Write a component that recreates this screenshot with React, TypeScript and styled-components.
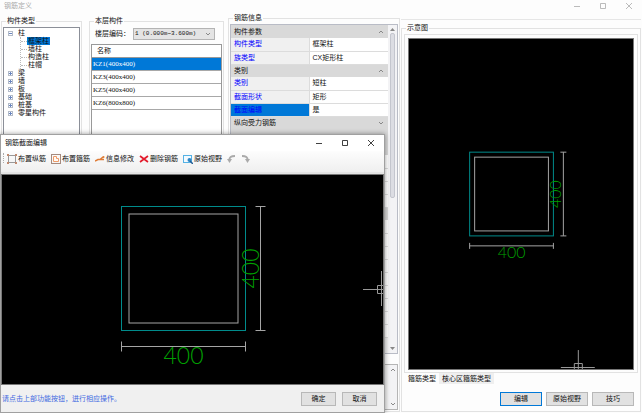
import React from "react";
import styled, { createGlobalStyle } from "styled-components";

const GlobalStyle = createGlobalStyle`
  html, body, #root { height: 100%; }
  body { margin: 0; background: #fdfdfd; }
  *, *::before, *::after { box-sizing: border-box; }
  body, button, select, input {
    font-family: "Liberation Mono", "Noto Sans CJK SC", monospace;
    font-size: 7px;
    line-height: 8px;
    color: #111;
  }
`;

const Window = styled.div`
  position: relative;
  display: flex;
  flex-direction: column;
  min-height: 100vh;
  overflow: hidden;
`;

const TitleBar = styled.header<{ $muted?: boolean }>`
  display: flex;
  align-items: center;
  justify-content: space-between;
  flex: none;
  height: ${(p) => (p.$muted ? 12 : 16)}px;
  padding: 0 4px;
  color: ${(p) => (p.$muted ? "#aaa" : "#111")};
`;

const Title = styled.h1`
  margin: 0;
  font-size: 7px;
  font-weight: 400;
`;

const WindowControls = styled.div`
  display: flex;
  gap: 18px;
  padding-right: 5px;
`;

const ControlButton = styled.button`
  display: flex;
  width: 8px;
  height: 8px;
  padding: 0;
  border: 0;
  background: none;
  color: inherit;
`;

const Columns = styled.main`
  display: flex;
  flex: 1;
  align-items: stretch;
  padding: 0 1px;
`;

const Group = styled.fieldset<{ $width: number; $top: number; $right: number }>`
  display: flex;
  flex-direction: column;
  flex: none;
  width: ${(p) => p.$width}px;
  min-width: 0;
  margin: ${(p) => p.$top}px ${(p) => p.$right}px 1px 0;
  padding: 1px;
  border: 1px solid #e2e2e2;
`;

const PreviewColumn = styled.div`
  display: flex;
  flex: 1;
  min-width: 0;
  margin-top: 7px;
  border-top: 1px solid #e6e6e6;
`;

const PreviewGroup = styled(Group)`
  flex: 1;
  width: auto;
`;

const Legend = styled.legend`
  margin-left: 3px;
  padding: 0 1px;
  line-height: 10px;
`;

const TreeBox = styled.nav`
  flex: 1;
  padding: 1px 4px;
  border: 1px solid #8b8f98;
  background: #fff;
`;

const TreeList = styled.ul<{ $nested?: boolean }>`
  margin: 0 0 0 ${(p) => (p.$nested ? 12 : 0)}px;
  padding: 0;
  list-style: none;
  border-left: ${(p) => (p.$nested ? "1px dotted #bbb" : "0")};
`;

const TreeRow = styled.div`
  display: flex;
  align-items: center;
  height: 8px;
`;

const Expander = styled.button`
  display: flex;
  width: 5px;
  height: 5px;
  margin-right: 4px;
  padding: 0;
  border: 0;
  background: none;
`;

const Branch = styled.span`
  width: 6px;
  border-top: 1px dotted #bbb;
`;

const TreeLabel = styled.span<{ $selected?: boolean }>`
  padding: 0 1px;
  background: ${(p) => (p.$selected ? "#0078d7" : "transparent")};
`;

const FloorField = styled.label`
  display: flex;
  align-items: center;
  justify-content: space-between;
  height: 13px;
  margin: 0 7px 4px 4px;
`;

const SelectFrame = styled.span`
  display: flex;
  align-items: center;
  width: 82px;
  height: 12px;
  padding-right: 3px;
  border: 1px solid #b4b4b4;
  background: #e4e4e4;
`;

const Select = styled.select`
  flex: 1;
  min-width: 0;
  padding: 0 0 0 1px;
  border: 0;
  appearance: none;
  background: transparent;
  font-size: 6px;
`;

const ListBox = styled.div`
  flex: 1;
  border: 1px solid #999;
  background: #fff;
`;

const ListTable = styled.table`
  width: 100%;
  border-collapse: collapse;
`;

const ListHead = styled.th`
  height: 12px;
  padding: 0 5px;
  border-bottom: 1px solid #999;
  font-weight: 400;
  text-align: left;
`;

const ListCell = styled.td<{ $selected?: boolean }>`
  height: 13px;
  padding: 0 1px;
  border-bottom: 1px solid #a8a8a8;
  background: ${(p) => (p.$selected ? "#0078d7" : "#fff")};
  color: ${(p) => (p.$selected ? "#fff" : "#111")};
  font-family: "Liberation Serif", serif;
`;

const InfoBox = styled.div`
  display: flex;
  flex: 1;
  border: 1px solid #b9bcc6;
  background: #f0f0f0;
`;

const PropertyTable = styled.table`
  flex: 1;
  align-self: flex-start;
  border-collapse: collapse;
  table-layout: fixed;
`;

const SectionHead = styled.th`
  height: 13px;
  padding: 0 4px 0 3px;
  background: #d9d9d9;
  font-weight: 400;
  text-align: left;
`;

const SectionLine = styled.div`
  display: flex;
  align-items: center;
  justify-content: space-between;
`;

const PropertyName = styled.th<{ $selected?: boolean }>`
  width: 78px;
  height: 13px;
  padding: 0 3px;
  border-bottom: 1px solid #dcdcdc;
  background: ${(p) => (p.$selected ? "#0078d7" : "#f0f0f0")};
  color: #00f;
  font-weight: 400;
  text-align: left;
`;

const PropertyValue = styled.td`
  padding: 0 3px;
  border-bottom: 1px solid #dcdcdc;
  border-left: 1px solid #dcdcdc;
  background: #fff;
  font-family: "Liberation Sans", "Noto Sans CJK SC", sans-serif;
`;

const ScrollTrack = styled.div`
  display: flex;
  flex-direction: column;
  align-items: center;
  justify-content: space-between;
  flex: none;
  width: 9px;
  padding: 3px 0;
  background: #f3f3f5;
`;

const ScrollThumb = styled.div`
  width: 5px;
  height: 165px;
  margin: 2px 0 auto;
  border: 1px solid #c4c6ce;
  border-radius: 2px;
  background: #dcdde3;
`;

const NoteBox = styled.div`
  display: flex;
  justify-content: flex-end;
  height: 46px;
  margin-top: 10px;
  border: 1px solid #b5b5b5;
  background: #f0f0f0;
`;

const TabPanel = styled.div`
  display: flex;
  flex: 1;
  margin: 0 1px;
  padding: 3px 3px 2px;
  border: 1px solid #e2e2e2;
`;

const Viewport = styled.div`
  display: flex;
  flex: 1;
  min-width: 0;
  border: 1px solid #777;
  background: #000;
`;

const Drawing = styled.svg`
  display: block;
  width: 100%;
  height: 100%;
`;

const Dimension = styled.text`
  fill: #00a000;
  font-family: Lato, "Liberation Sans", sans-serif;
  font-weight: 300;
  text-anchor: middle;
`;

const Tabs = styled.div`
  display: flex;
  margin-left: 2px;
`;

const Tab = styled.button<{ $active?: boolean }>`
  height: 11px;
  padding: 0 3px;
  border: 0;
  background: ${(p) => (p.$active ? "#fdfdfd" : "#efefef")};
`;

const Actions = styled.div`
  display: flex;
  justify-content: flex-end;
  gap: 4px;
  margin: 8px 5px 4px 0;
`;

const PushButton = styled.button<{ $width: number; $default?: boolean }>`
  width: ${(p) => p.$width}px;
  height: 14px;
  padding: 0;
  border: 1px solid ${(p) => (p.$default ? "#0078d7" : "#b8b8b8")};
  background: #e1e1e1;
`;

const Dialog = styled.section`
  position: absolute;
  top: 134px;
  bottom: 0;
  left: 0;
  display: flex;
  flex-direction: column;
  width: 385px;
  border: 1px solid #a0a0a0;
  background: #fff;
  box-shadow: 0 0 5px rgba(0, 0, 0, 0.4);
`;

const Toolbar = styled.div`
  display: flex;
  align-items: flex-start;
  gap: 5px;
  height: 23px;
  padding: 2px 0 0 2px;
  border-bottom: 2px solid #e4e4e4;
  background: linear-gradient(#fdfdfd, #efefef);
`;

const Grip = styled.span`
  height: 10px;
  margin-right: -2px;
  border-left: 1px dotted #aaa;
`;

const ToolButton = styled.button`
  display: flex;
  align-items: center;
  gap: 1px;
  height: 11px;
  padding: 0;
  border: 0;
  background: none;
  white-space: nowrap;
`;

const DialogFooter = styled.footer`
  display: flex;
  align-items: center;
  gap: 6px;
  height: 27px;
  padding: 0 7px 0 1px;
  background: #f0f0f0;
`;

const Hint = styled.p`
  flex: 1;
  margin: 0;
  color: #4169e1;
`;

function Controls() {
  const shapes = [
    ["最小化", "M1 4.5H7"],
    ["最大化", "M1.5 1.5H6.5V6.5H1.5Z"],
    ["关闭", "M1 1L7 7M7 1L1 7"],
  ];
  return (
    <WindowControls>
      {shapes.map(([label, d]) => (
        <ControlButton key={label} aria-label={label}>
          <svg width="8" height="8" fill="none" stroke="currentColor" strokeOpacity="0.8"><path d={d} /></svg>
        </ControlButton>
      ))}
    </WindowControls>
  );
}

function Chevron({ up }: { up?: boolean }) {
  return (
    <svg width="6" height="4" fill="none" stroke="#888">
      <path d={up ? "M1 3L3 1L5 3" : "M1 1L3 3L5 1"} />
    </svg>
  );
}

function TreeToggle({ open }: { open?: boolean }) {
  return (
    <Expander aria-label={open ? "折叠" : "展开"}>
      <svg width="5" height="5" fill="none">
        <rect x="0.5" y="0.5" width="4" height="4" fill="#fff" stroke="#b4bcc9" />
        <path d={open ? "M1 2.5H4" : "M1 2.5H4M2.5 1V4"} stroke="#6a86c0" />
      </svg>
    </Expander>
  );
}

function SectionDrawing(p: {
  viewBox: string; x: number; y: number; size: number; inset: number;
  tick: number; gapX: number; gapY: number; font: number; cap: number; cursor: string;
}) {
  const { x, y, size, inset, tick, gapX, gapY, font, cap } = p;
  const right = x + size;
  const bottom = y + size;
  const dx = right + gapX;
  const dy = bottom + gapY;
  const mid = size / 2;
  const textX = dx - 2;
  const textY = y + mid;
  return (
    <Drawing viewBox={p.viewBox} preserveAspectRatio="xMidYMid slice" fill="none">
      <rect x={x} y={y} width={size} height={size} stroke="#008b8b" />
      <rect x={x + inset} y={y + inset} width={size - 2 * inset} height={size - 2 * inset} stroke="#a5a5a5" />
      <path
        stroke="#a5a5a5"
        d={`M${dx} ${y}V${bottom}M${dx - tick} ${y}H${dx + tick}M${dx - tick} ${bottom}H${dx + tick}M${x} ${dy}H${right}M${x} ${dy - tick}V${dy + tick}M${right} ${dy - tick}V${dy + tick}`}
      />
      <path stroke="#999" d={p.cursor} />
      <Dimension x={x + mid} y={dy + cap} fontSize={font}>400</Dimension>
      <Dimension x={textX} y={textY} fontSize={font} transform={`rotate(-90 ${textX} ${textY})`}>400</Dimension>
    </Drawing>
  );
}

const columnKinds = ["框架柱", "墙柱", "构造柱", "柱帽"];
const otherKinds = ["梁", "墙", "板", "基础", "桩基", "零星构件"];
const members = ["KZ1(400x400)", "KZ3(400x400)", "KZ5(400x400)", "KZ6(800x800)"];

const blankRows = (count: number): [string, string][] =>
  Array.from({ length: count }, () => ["", ""]);

const properties: { section: string; open?: boolean; rows: [string, string][] }[] = [
  { section: "构件参数", open: true, rows: [["构件类型", "框架柱"], ["族类型", "CX矩形柱"]] },
  { section: "类别", open: true, rows: [["类别", "短柱"], ["截面形状", "矩形"], ["截面编辑", "是"]] },
  { section: "纵向受力钢筋", rows: [] },
  { section: "", rows: [] },
  { section: "", rows: blankRows(4) },
  { section: "", rows: blankRows(9) },
];

const tools = [
  {
    label: "布置纵筋",
    icon: <><path d="M2 1.5H8M2 8.5H8M1.5 2V8M8.5 2V8" stroke="#999" /><path d="M0 1H2M8 1H10M0 9H2M8 9H10" stroke="#c08a70" strokeWidth="2" /></>,
  },
  {
    label: "布置箍筋",
    icon: <><rect x="0.5" y="0.5" width="9" height="9" stroke="#a58a7e" /><path d="M2.5 2.5V7.5H7.5V4.5H5.5V2.5Z" stroke="#ee9b68" fill="#fffaf5" /></>,
  },
  {
    label: "信息修改",
    icon: <><path d="M0 7L3 5.5H9M5 5.5L8 3" stroke="#df7b35" strokeWidth="1.5" /><circle cx="8.5" cy="3" r="1" fill="#df7b35" /></>,
  },
  { label: "删除钢筋", icon: <path d="M1 2L9 8M9 2L1 8" stroke="#e21b2c" strokeWidth="1.7" /> },
  {
    label: "原始视野",
    icon: <><rect x="0.5" y="1.5" width="8" height="7" stroke="#55b2e5" fill="#f2faff" /><circle cx="6.5" cy="6" r="2" fill="#2f86c5" /><path d="M7 7L10 10" stroke="#245f96" strokeWidth="1.5" /></>,
  },
];

export default function App() {
  return (
    <Window>
      <GlobalStyle />
      <TitleBar $muted>
        <Title>钢筋定义</Title>
        <Controls />
      </TitleBar>
      <Columns>
        <Group $width={81} $top={4} $right={7}>
          <Legend>构件类型</Legend>
          <TreeBox aria-label="构件类型">
            <TreeList>
              <li>
                <TreeRow><TreeToggle open /><TreeLabel>柱</TreeLabel></TreeRow>
                <TreeList $nested>
                  {columnKinds.map((kind, i) => (
                    <li key={kind}><TreeRow><Branch /><TreeLabel $selected={i === 0}>{kind}</TreeLabel></TreeRow></li>
                  ))}
                </TreeList>
              </li>
              {otherKinds.map((kind) => (
                <li key={kind}><TreeRow><TreeToggle /><TreeLabel>{kind}</TreeLabel></TreeRow></li>
              ))}
            </TreeList>
          </TreeBox>
        </Group>

        <Group $width={135} $top={4} $right={4}>
          <Legend>本层构件</Legend>
          <FloorField>
            楼层编码：
            <SelectFrame>
              <Select defaultValue="1"><option value="1">1 (0.000m~3.600m)</option></Select>
              <Chevron />
            </SelectFrame>
          </FloorField>
          <ListBox>
            <ListTable>
              <thead><tr><ListHead>名称</ListHead></tr></thead>
              <tbody>
                {members.map((m, i) => <tr key={m}><ListCell $selected={i === 0}>{m}</ListCell></tr>)}
              </tbody>
            </ListTable>
          </ListBox>
        </Group>

        <Group $width={172} $top={1} $right={1}>
          <Legend>钢筋信息</Legend>
          <InfoBox>
            <PropertyTable>
              <tbody>
                {properties.map((group, g) => (
                  <React.Fragment key={g}>
                    <tr>
                      <SectionHead colSpan={2}>
                        <SectionLine>{group.section}{group.section && <Chevron up={group.open} />}</SectionLine>
                      </SectionHead>
                    </tr>
                    {group.rows.map(([name, value], r) => (
                      <tr key={r}>
                        <PropertyName $selected={name === "截面编辑"}>{name}</PropertyName>
                        <PropertyValue>{value}</PropertyValue>
                      </tr>
                    ))}
                  </React.Fragment>
                ))}
              </tbody>
            </PropertyTable>
            <ScrollTrack>
              <svg width="5" height="3" fill="#888"><path d="M0 3L2.5 0L5 3Z" /></svg>
              <ScrollThumb />
              <svg width="5" height="3" fill="#888"><path d="M0 0L2.5 3L5 0Z" /></svg>
            </ScrollTrack>
          </InfoBox>
          <NoteBox>
            <ScrollTrack><Chevron up /><Chevron /></ScrollTrack>
          </NoteBox>
        </Group>

        <PreviewColumn>
          <PreviewGroup $width={240} $top={3} $right={0}>
            <Legend>示意图</Legend>
            <TabPanel>
              <Viewport>
                <SectionDrawing
                  viewBox="408 39 226 331" x={469.5} y={152.5} size={84} inset={5}
                  tick={3} gapX={10} gapY={10} font={16} cap={12}
                  cursor="M578.5 351V370M561 368.5H595M574.5 370V364.5H582.5V370"
                />
              </Viewport>
            </TabPanel>
            <Tabs>
              <Tab $active>箍筋类型</Tab>
              <Tab>核心区箍筋类型</Tab>
            </Tabs>
            <Actions>
              <PushButton $width={42} $default>编辑</PushButton>
              <PushButton $width={42}>原始视野</PushButton>
              <PushButton $width={42}>技巧</PushButton>
            </Actions>
          </PreviewGroup>
        </PreviewColumn>
      </Columns>

      <Dialog role="dialog" aria-label="钢筋截面编辑">
        <TitleBar>
          <Title>钢筋截面编辑</Title>
          <Controls />
        </TitleBar>
        <Toolbar>
          <Grip />
          {tools.map((tool) => (
            <ToolButton key={tool.label}>
              <svg width="10" height="10" fill="none">{tool.icon}</svg>
              {tool.label}
            </ToolButton>
          ))}
          <ToolButton aria-label="撤销">
            <svg width="9" height="9" fill="none"><path d="M2.5 6Q2 2 8 2" stroke="#aaa" strokeWidth="2" /><path d="M0 5H5L2.5 9Z" fill="#aaa" /></svg>
          </ToolButton>
          <ToolButton aria-label="重做">
            <svg width="9" height="9" fill="none"><path d="M6.5 6Q7 2 1 2" stroke="#aaa" strokeWidth="2" /><path d="M4 5H9L6.5 9Z" fill="#aaa" /></svg>
          </ToolButton>
        </Toolbar>
        <Viewport>
          <SectionDrawing
            viewBox="2 175 381 209" x={121.5} y={206.5} size={124} inset={7.5}
            tick={5} gapX={15} gapY={16} font={23} cap={17}
            cursor="M381.5 271V306M363 289.5H384M384 285.5H377.5V293.5H384"
          />
        </Viewport>
        <DialogFooter>
          <Hint>请点击上部功能按钮，进行相应操作。</Hint>
          <PushButton $width={35}>确定</PushButton>
          <PushButton $width={35}>取消</PushButton>
        </DialogFooter>
      </Dialog>
    </Window>
  );
}
